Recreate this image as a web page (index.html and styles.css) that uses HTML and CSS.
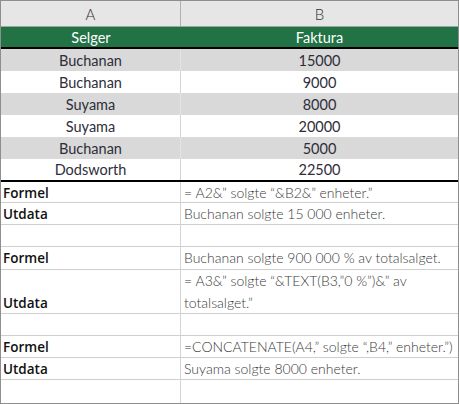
FILE: index.html
```html
<!DOCTYPE html>
<html>
<head>
<meta charset="utf-8">
<link rel="stylesheet" href="styles.css">
</head>
<body>
<div class="sheet">
  <div class="row colhead">
    <div class="cell a">A</div>
    <div class="cell b">B</div>
  </div>
  <div class="row title">
    <div class="cell a">Selger</div>
    <div class="cell b">Faktura</div>
  </div>
  <div class="row data shade">
    <div class="cell a">Buchanan</div>
    <div class="cell b">15000</div>
  </div>
  <div class="row data">
    <div class="cell a">Buchanan</div>
    <div class="cell b">9000</div>
  </div>
  <div class="row data shade">
    <div class="cell a">Suyama</div>
    <div class="cell b">8000</div>
  </div>
  <div class="row data">
    <div class="cell a">Suyama</div>
    <div class="cell b">20000</div>
  </div>
  <div class="row data shade">
    <div class="cell a">Buchanan</div>
    <div class="cell b">5000</div>
  </div>
  <div class="row data last">
    <div class="cell a">Dodsworth</div>
    <div class="cell b">22500</div>
  </div>
  <div class="row info first">
    <div class="cell a">Formel</div>
    <div class="cell b">= A2&amp;” solgte “&amp;B2&amp;” enheter.”</div>
  </div>
  <div class="row info">
    <div class="cell a">Utdata</div>
    <div class="cell b">Buchanan solgte 15 000 enheter.</div>
  </div>
  <div class="row info">
    <div class="cell a"></div>
    <div class="cell b"></div>
  </div>
  <div class="row info tall1">
    <div class="cell a">Formel</div>
    <div class="cell b">Buchanan solgte 900 000 % av totalsalget.</div>
  </div>
  <div class="row info double">
    <div class="cell a">Utdata</div>
    <div class="cell b">= A3&amp;” solgte “&amp;TEXT(B3,”0 %”)&amp;” av<br>totalsalget.”</div>
  </div>
  <div class="row info">
    <div class="cell a"></div>
    <div class="cell b"></div>
  </div>
  <div class="row info">
    <div class="cell a">Formel</div>
    <div class="cell b">=CONCATENATE(A4,” solgte “,B4,” enheter.”)</div>
  </div>
  <div class="row info">
    <div class="cell a">Utdata</div>
    <div class="cell b">Suyama solgte 8000 enheter.</div>
  </div>
  <div class="row info end">
    <div class="cell a"></div>
    <div class="cell b"></div>
  </div>
</div>
</body>
</html>
```
FILE: styles.css
```css
html, body {
  margin: 0;
  padding: 0;
  background: #ffffff;
}

.sheet {
  width: 459px;
  height: 404px;
  box-sizing: border-box;
  border: 1px solid #8e8e8e;
  font-family: "Lato", "Open Sans", sans-serif;
  font-size: 14px;
  color: #333333;
  overflow: hidden;
}

.row {
  display: grid;
  grid-template-columns: 180px 1fr;
}

.cell {
  box-sizing: border-box;
  white-space: nowrap;
}

.cell.a {
  border-right: 1px solid #d4d4d4;
}

/* column letters */
.colhead {
  height: 26px;
  background: #e6e6e6;
  border-bottom: 1px solid #a2a2a2;
  box-sizing: border-box;
}
.colhead .cell {
  display: flex;
  align-items: center;
  justify-content: center;
  font-size: 15px;
  font-weight: 300;
  color: #333333;
  padding-top: 1px;
}
.colhead .cell.a {
  border-right: 1px solid #b0b0b0;
}

/* green title row */
.title {
  height: 22px;
  background: #217346;
  border-bottom: 2px solid #000000;
  box-sizing: border-box;
}
.title .cell {
  display: flex;
  align-items: center;
  justify-content: center;
  color: #ffffff;
  border-right: none;
  font-size: 14.5px;
}

/* data rows */
.data {
  height: 22px;
}
.data.last {
  height: 21px;
}
.data.shade {
  background: #d9d9d9;
}
.data .cell {
  display: flex;
  align-items: center;
  justify-content: center;
  color: #2e2e3a;
  font-size: 14.5px;
}
.data.shade .cell.a {
  border-right-color: #e4e4e4;
}

/* formula rows */
.info {
  height: 22px;
  border-bottom: 1px solid #cfcfcf;
  box-sizing: border-box;
}
.info.first {
  border-top: 2px solid #000000;
  height: 23px;
}
.info.tall1 {
  height: 23px;
}
.info.double {
  height: 44px;
}
.info.end {
  height: 24px;
  border-bottom: none;
}
.info .cell {
  display: flex;
  align-items: flex-end;
  padding-bottom: 2px;
}
.info .cell.a {
  padding-left: 2px;
  font-family: "Open Sans", "Lato", sans-serif;
  font-weight: 600;
  font-size: 13.5px;
  color: #111111;
}
.info .cell.b {
  padding-left: 3px;
  font-weight: 300;
  color: #3a3a3a;
  line-height: 22px;
  padding-bottom: 0;
}
.info.double .cell.b {
  display: block;
  padding-top: 0;
}
```
